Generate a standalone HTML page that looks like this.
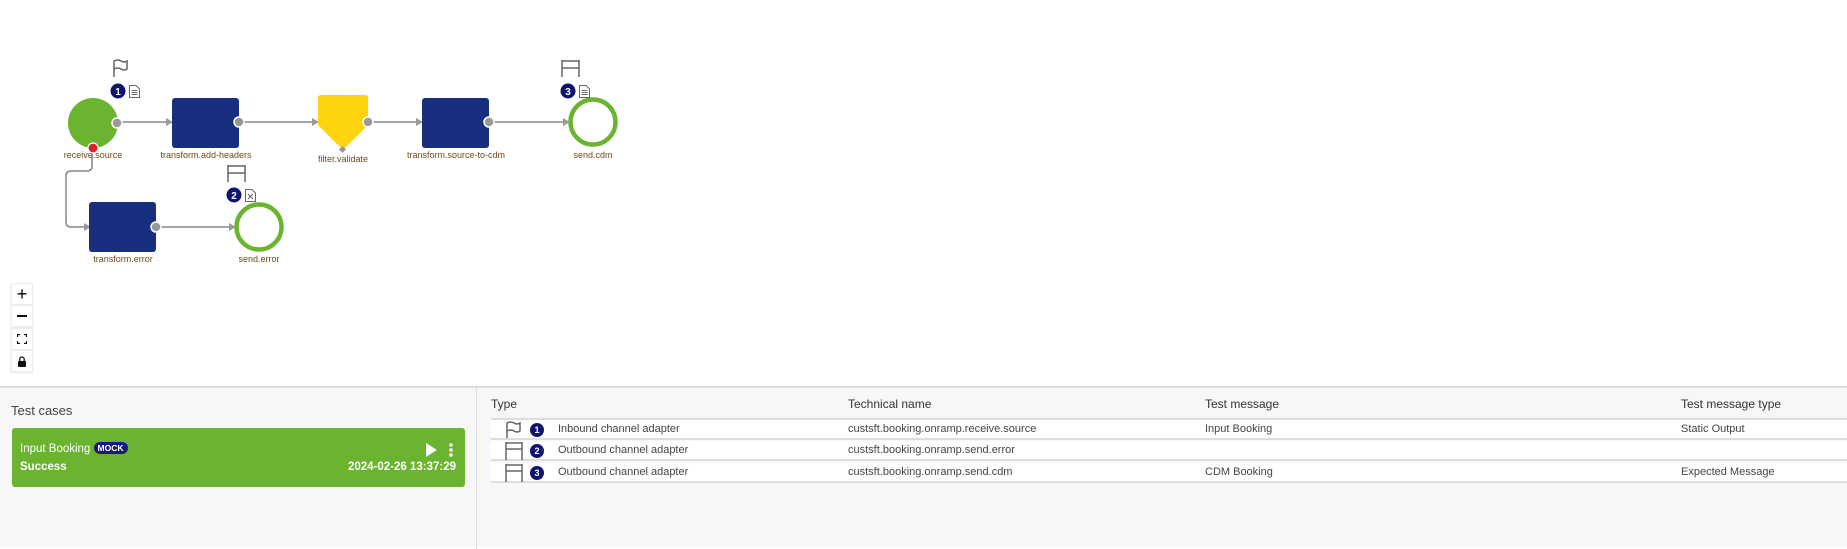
<!DOCTYPE html>
<html><head><meta charset="utf-8"><style>
*{margin:0;padding:0;box-sizing:border-box}
body{width:1847px;height:547px;overflow:hidden;background:#fff;font-family:"Liberation Sans",sans-serif;position:relative}
.abs{position:absolute}
.zb{position:absolute;left:11px;width:22px;height:22px;background:#fff;border:1px solid #eee;box-shadow:0 1px 2px rgba(0,0,0,.1);display:flex;align-items:center;justify-content:center}
.bottom{position:absolute;left:0;top:386px;width:1847px;height:161px;background:#f7f7f7;border-top:2px solid #ddd}
.row{position:absolute;left:491px;right:0;height:20px;background:#fff;border-bottom:2px solid #ddd;font-size:11px;color:#444}
.row span,.hdr span{position:absolute;top:3px;white-space:nowrap}
.hdr span{font-size:12px;color:#333;top:1px}
.badge{position:absolute;width:14px;height:14px;border-radius:50%;background:#0f1470;color:#fff;font-size:9px;font-weight:bold;text-align:center;line-height:14px;top:3px;left:39px}
</style></head><body>
<svg class="abs" style="left:0;top:0" width="620" height="280" viewBox="0 0 620 280">
<g fill="none" stroke="#888" stroke-width="1.5">
<line x1="98" y1="122" x2="166" y2="122"/>
<line x1="244" y1="122" x2="312" y2="122"/>
<line x1="373" y1="122" x2="416" y2="122"/>
<line x1="494" y1="122" x2="563" y2="122"/>
<line x1="160" y1="227" x2="229" y2="227"/>
<path d="M92 148 V166 Q92 171 87 171 H71 Q66 171 66 176 V222 Q66 227 71 227 H84"/>
</g>
<g fill="#999">
<polygon points="166,118 173,122 166,126"/><polygon points="312,118 319,122 312,126"/>
<polygon points="416,118 423,122 416,126"/><polygon points="563,118 570,122 563,126"/>
<polygon points="229,223 236,227 229,231"/><polygon points="84,223 91,227 84,231"/>
</g>
<circle cx="93" cy="123" r="25" fill="#6ab42f"/>
<rect x="172" y="98" width="67" height="50" rx="3" fill="#182e7e"/>
<path d="M321 95 H365 Q368 95 368 98 V125 L343 150 L318 125 V98 Q318 95 321 95Z" fill="#fdd40e"/>
<rect x="422" y="98" width="67" height="50" rx="3" fill="#182e7e"/>
<rect x="89" y="202" width="67" height="50" rx="3" fill="#182e7e"/>
<circle cx="593" cy="122" r="22.5" fill="none" stroke="#6ab42f" stroke-width="4.5"/>
<circle cx="259" cy="227" r="22.5" fill="none" stroke="#6ab42f" stroke-width="4.5"/>
<g fill="#999" stroke="#fff" stroke-width="1.5">
<circle cx="117" cy="123" r="5"/><circle cx="239" cy="122" r="5"/><circle cx="368" cy="122" r="5"/><circle cx="489" cy="122" r="5"/><circle cx="156" cy="227" r="5"/>
</g>
<rect x="340" y="147" width="5" height="5" fill="#999" transform="rotate(45 342.5 149.5)"/>
<circle cx="93" cy="148" r="5" fill="#e0202a" stroke="#fff" stroke-width="1.2"/>
<g font-size="9" fill="#6b4a1e" text-anchor="middle" font-family="Liberation Sans,sans-serif">
<text x="93" y="158">receive.source</text><text x="206" y="158">transform.add-headers</text>
<text x="343" y="162">filter.validate</text><text x="456" y="158">transform.source-to-cdm</text>
<text x="593" y="158">send.cdm</text><text x="123" y="262">transform.error</text><text x="259" y="262">send.error</text>
</g>
<g fill="none" stroke="#666" stroke-width="1.5">
<path d="M114 77 V61 Q118 59 121 61 Q124 63 127 61 V69 Q124 71 121 69 Q118 67 114 69"/>
<path d="M562 77 V60 M579 77 V60 M562 61 H579 M562 68 H579"/>
<path d="M228 182 V165 M245 182 V165 M228 166 H245 M228 173 H245"/>
</g>
<g fill="#0f1470"><circle cx="118" cy="91" r="7.5"/><circle cx="568" cy="91" r="7.5"/><circle cx="234" cy="195" r="7.5"/></g>
<g fill="#fff" font-size="10" font-weight="bold" text-anchor="middle" font-family="Liberation Sans,sans-serif">
<text x="118" y="95">1</text><text x="568" y="95">3</text><text x="234" y="199">2</text></g>
<g fill="#fff" stroke="#666" stroke-width="1">
<path d="M129.5 85.5 H136 L139.5 89 V97.5 H129.5Z"/><path d="M579.5 85.5 H586 L589.5 89 V97.5 H579.5Z"/><path d="M245.5 189.5 H252 L255.5 193 V201.5 H245.5Z"/>
</g>
<g stroke="#666" stroke-width="1"><path d="M131.5 90.5H137.5M131.5 92.5H137.5M131.5 94.5H137.5M581.5 90.5H587.5M581.5 92.5H587.5M581.5 94.5H587.5M248 194L253 199M253 194L248 199"/></g>
</svg>
<div class="zb" style="top:283px;font-size:18px;line-height:1">+</div>
<div class="zb" style="top:305px"><div style="width:10px;height:1.5px;background:#111"></div></div>
<div class="zb" style="top:328px"><svg width="10" height="10"><path d="M0.5 3V0.5H3M7 0.5H9.5V3M9.5 7V9.5H7M3 9.5H0.5V7" fill="none" stroke="#111" stroke-width="1.2"/></svg></div>
<div class="zb" style="top:350px"><svg width="8" height="11"><path d="M1.8 5V3.2a2.2 2.2 0 0 1 4.4 0V5" fill="none" stroke="#111" stroke-width="1.3"/><rect x="0" y="5" width="8" height="6" rx="1" fill="#111"/></svg></div>
<div class="bottom">
<div class="abs" style="left:476px;top:0;width:1px;height:161px;background:#ddd"></div>
<div class="abs" style="left:11px;top:15px;font-size:13px;color:#444">Test cases</div>
<div class="abs" style="left:12px;top:40px;width:453px;height:59px;background:#6ab42f;border-radius:3px;color:#fff">
<div class="abs" style="left:8px;top:14px;font-size:11.5px">Input Booking <span style="display:inline-block;background:#1a1a7e;border-radius:8px;font-size:8.5px;padding:1px 4px;font-weight:bold;vertical-align:1px">MOCK</span></div>
<div class="abs" style="left:8px;top:33px;font-size:11.5px;font-weight:bold">Success</div>
<div class="abs" style="right:9px;top:33px;font-size:11.5px;font-weight:bold">2024-02-26 13:37:29</div>
<svg class="abs" style="left:414px;top:15px" width="30" height="14"><polygon points="0,0 11,7 0,14" fill="#fff"/><circle cx="25" cy="2" r="1.8" fill="#fff"/><circle cx="25" cy="7" r="1.8" fill="#fff"/><circle cx="25" cy="12" r="1.8" fill="#fff"/></svg>
</div>
</div>
<div class="hdr abs" style="left:491px;top:396px;right:0;height:20px">
<span style="left:0">Type</span><span style="left:357px">Technical name</span><span style="left:714px">Test message</span><span style="left:1190px">Test message type</span></div>
<div class="abs" style="left:491px;right:0;top:418px;height:2px;background:#ddd"></div>
<div class="row" style="top:420px"><svg class="abs" style="left:14px;top:1px" width="16" height="18"><path d="M2 17V2Q6 0 9 2Q12 4 15 2V10Q12 12 9 10Q6 8 2 10" fill="none" stroke="#666" stroke-width="1.5"/></svg><div class="badge">1</div><span style="left:67px">Inbound channel adapter</span><span style="left:357px">custsft.booking.onramp.receive.source</span><span style="left:714px">Input Booking</span><span style="left:1190px">Static Output</span></div>
<div class="row" style="top:441px"><svg class="abs" style="left:14px;top:0" width="18" height="19"><path d="M1 19V1M17 19V1M1 2H17M1 8H17" fill="none" stroke="#666" stroke-width="1.5"/></svg><div class="badge">2</div><span style="left:67px">Outbound channel adapter</span><span style="left:357px">custsft.booking.onramp.send.error</span></div>
<div class="row" style="top:463px"><svg class="abs" style="left:14px;top:0" width="18" height="19"><path d="M1 19V1M17 19V1M1 2H17M1 8H17" fill="none" stroke="#666" stroke-width="1.5"/></svg><div class="badge">3</div><span style="left:67px">Outbound channel adapter</span><span style="left:357px">custsft.booking.onramp.send.cdm</span><span style="left:714px">CDM Booking</span><span style="left:1190px">Expected Message</span></div>
</body></html>
